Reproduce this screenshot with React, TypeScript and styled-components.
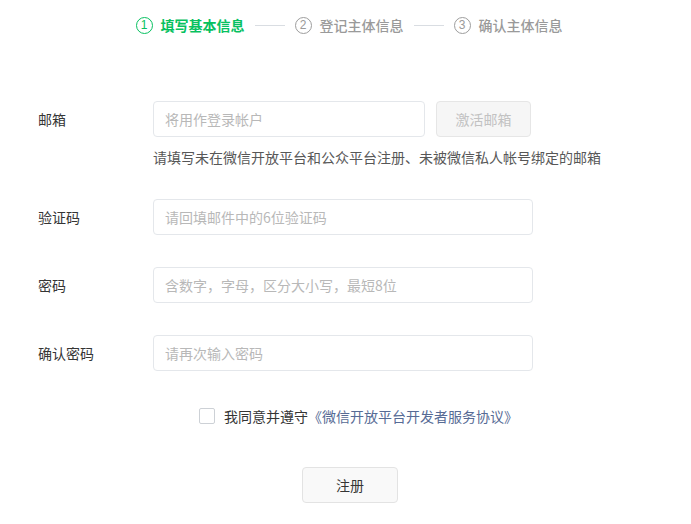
import React from "react";
import styled, { createGlobalStyle } from "styled-components";

const Global = createGlobalStyle`
  html, body { margin: 0; padding: 0; background: #ffffff; }
  body {
    font-family: "Noto Sans CJK SC", "Noto Sans", sans-serif;
    color: #353535;
    -webkit-font-smoothing: antialiased;
  }
  input::placeholder { color: #b8b8b8; }
`;

const Page = styled.div`
  width: 691px;
  min-height: 524px;
  box-sizing: border-box;
`;

const Steps = styled.div`
  display: flex;
  align-items: center;
  justify-content: center;
  padding: 15px 0 0 7px;
  height: 20px;
  box-sizing: content-box;
`;

const Step = styled.div<{ $active?: boolean }>`
  display: flex;
  align-items: center;
  gap: 8px;
  font-size: 14px;
  line-height: 20px;
  font-weight: ${(p) => (p.$active ? 600 : 500)};
  color: ${(p) => (p.$active ? "#07c160" : "#9a9a9a")};
`;

const StepNum = styled.span<{ $active?: boolean }>`
  width: 17px;
  height: 17px;
  box-sizing: border-box;
  border-radius: 50%;
  border: 1.3px solid ${(p) => (p.$active ? "#07c160" : "#9d9d9d")};
  display: flex;
  align-items: center;
  justify-content: center;
  font-size: 12px;
  font-weight: 400;
  line-height: 1;
  font-family: "Liberation Sans", sans-serif;
`;

const StepLine = styled.span`
  width: 30px;
  height: 1px;
  background: #d9dde2;
  margin: 0 10px;
`;

const Form = styled.div`
  margin-top: 66px;
  padding-left: 38px;
`;

const Row = styled.div<{ $gap?: number }>`
  display: grid;
  grid-template-columns: 115px auto;
  align-items: start;
  margin-top: ${(p) => p.$gap ?? 0}px;
`;

const Label = styled.label`
  font-size: 14px;
  line-height: 36px;
  height: 36px;
  color: #353535;
`;

const Field = styled.div`
  display: flex;
  flex-direction: column;
`;

const InputLine = styled.div`
  display: flex;
  gap: 11px;
`;

const Input = styled.input<{ $w: number }>`
  width: ${(p) => p.$w}px;
  height: 36px;
  box-sizing: border-box;
  border: 1px solid #e4e7eb;
  border-radius: 4px;
  padding: 0 11px;
  font-size: 14px;
  font-family: inherit;
  color: #353535;
  outline: none;
  background: #fff;
`;

const GhostButton = styled.button`
  width: 95px;
  height: 36px;
  box-sizing: border-box;
  border: 1px solid #e6e6e6;
  border-radius: 4px;
  background: #f6f6f6;
  color: #c2c2c2;
  font-size: 14px;
  font-family: inherit;
  padding: 0;
`;

const Hint = styled.div`
  margin-top: 9px;
  font-size: 14px;
  line-height: 22px;
  color: #575757;
  white-space: nowrap;
`;

const AgreeRow = styled.div`
  display: flex;
  align-items: center;
  margin: 34px 0 0 199px;
  height: 22px;
  font-size: 14px;
  color: #353535;
`;

const Check = styled.span`
  width: 16px;
  height: 16px;
  box-sizing: border-box;
  border: 1px solid #cdd1d6;
  border-radius: 2px;
  margin-right: 9px;
  background: #fff;
`;

const Link = styled.a`
  color: #576b95;
  text-decoration: none;
`;

const Submit = styled.button`
  display: block;
  margin: 40px 0 0 302px;
  width: 96px;
  height: 36px;
  box-sizing: border-box;
  border: 1px solid #e3e3e3;
  border-radius: 4px;
  background: #f9f9f9;
  color: #353535;
  font-size: 14px;
  font-family: inherit;
  padding: 0;
`;

const steps = ["填写基本信息", "登记主体信息", "确认主体信息"];

export default function App() {
  return (
    <Page>
      <Global />
      <Steps>
        {steps.map((s, i) => (
          <React.Fragment key={s}>
            {i > 0 && <StepLine />}
            <Step $active={i === 0}>
              <StepNum $active={i === 0}>{i + 1}</StepNum>
              {s}
            </Step>
          </React.Fragment>
        ))}
      </Steps>
      <Form>
        <Row>
          <Label>邮箱</Label>
          <Field>
            <InputLine>
              <Input $w={272} placeholder="将用作登录帐户" />
              <GhostButton>激活邮箱</GhostButton>
            </InputLine>
            <Hint>请填写未在微信开放平台和公众平台注册、未被微信私人帐号绑定的邮箱</Hint>
          </Field>
        </Row>
        <Row $gap={31}>
          <Label>验证码</Label>
          <Input $w={380} placeholder="请回填邮件中的6位验证码" />
        </Row>
        <Row $gap={32}>
          <Label>密码</Label>
          <Input $w={380} type="password" placeholder="含数字，字母，区分大小写，最短8位" />
        </Row>
        <Row $gap={32}>
          <Label>确认密码</Label>
          <Input $w={380} type="password" placeholder="请再次输入密码" />
        </Row>
      </Form>
      <AgreeRow>
        <Check />
        我同意并遵守<Link href="#">《微信开放平台开发者服务协议》</Link>
      </AgreeRow>
      <Submit>注册</Submit>
    </Page>
  );
}
